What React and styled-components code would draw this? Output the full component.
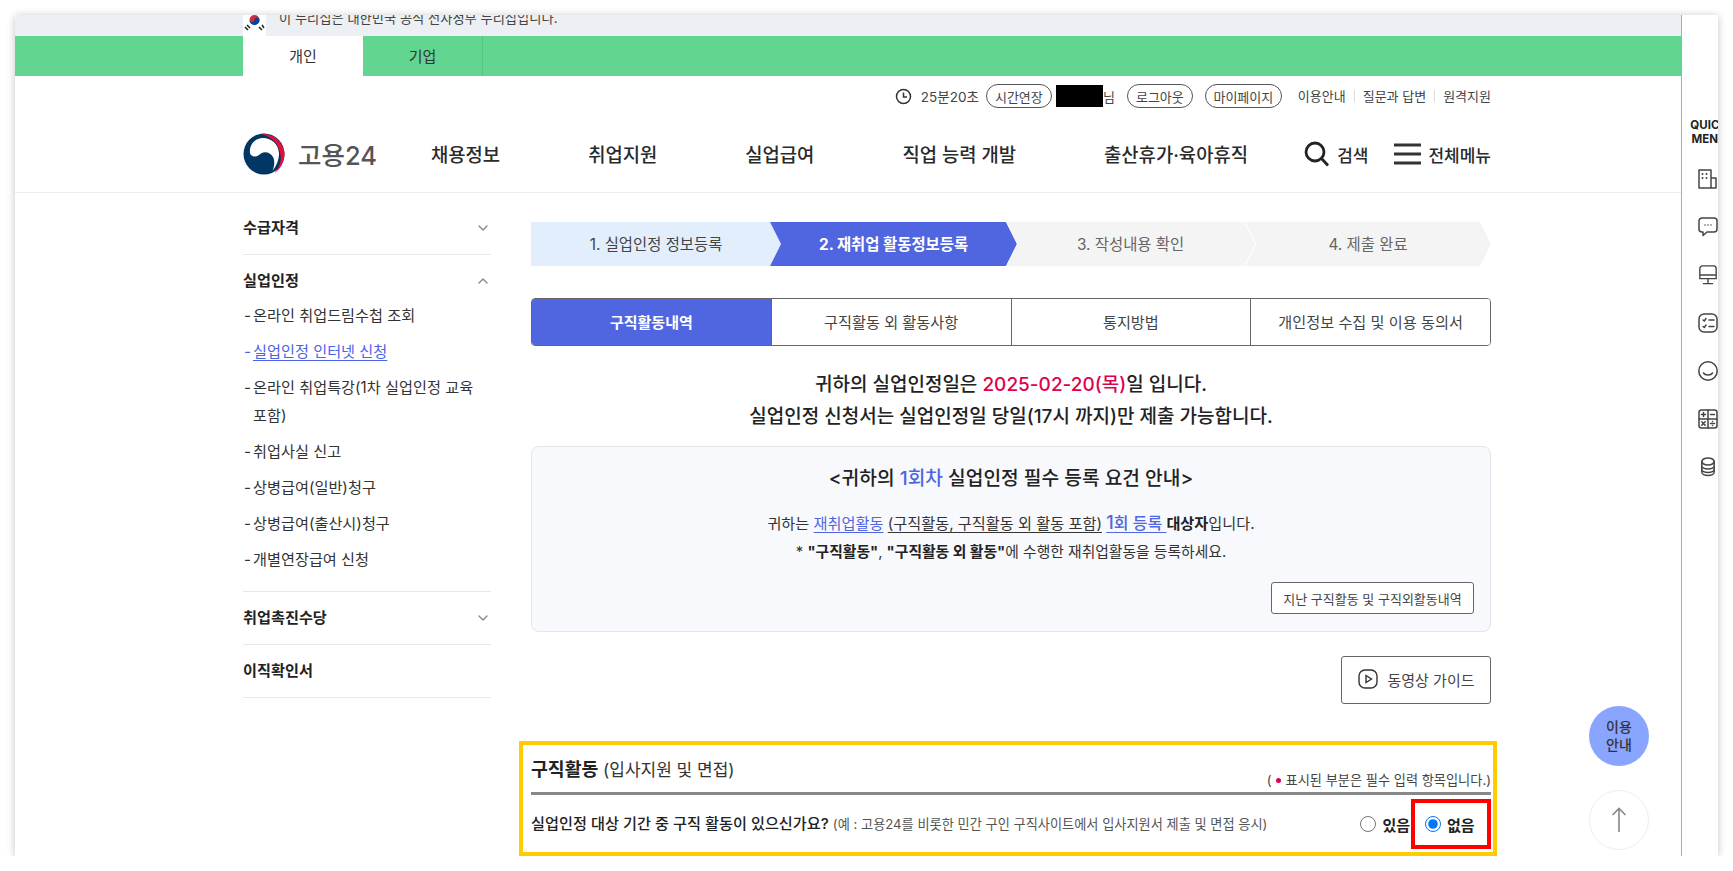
import React from 'react';
import styled, { createGlobalStyle } from 'styled-components';
import { ChevronDown, ChevronUp } from 'lucide-react';

const GlobalStyle = createGlobalStyle`
  html, body {
    margin: 0;
    padding: 0;
    background: #fff;
    overflow: hidden;
  }
  body {
    font-family: "Inter", "Noto Sans CJK KR", "Noto Sans", sans-serif;
    color: #222;
    word-break: keep-all;
  }
  * { box-sizing: border-box; }
`;

const Window = styled.div`
  position: relative;
  display: flex;
  width: 1703px;
  height: 841px;
  margin: 15px 0 0 15px;
  overflow: hidden;
  background: #fff;
  border-radius: 4px 0 0 0;
  box-shadow: 0 1px 8px rgba(0, 0, 0, 0.24);
`;
const Main = styled.div`
  width: 1667px;
  flex: none;
  border-right: 1px solid #62d590;
  overflow: hidden;
`;

const Banner = styled.div`
  display: flex;
  align-items: flex-end;
  gap: 13px;
  height: 21px;
  padding: 0 0 0 228px;
  background: #eceff3;
  overflow: hidden;
`;
const Flag = styled.svg`
  width: 23px;
  height: 30px;
  margin-bottom: -1px;
  flex: none;
`;
const BannerText = styled.span`
  font-size: 13.25px;
  line-height: 20px;
  margin-bottom: 8px;
  color: #444;
  white-space: nowrap;
`;

const GnbTabs = styled.div`
  display: flex;
  height: 40px;
  padding-left: 228px;
  background: #62d590;
`;
const GnbTab = styled.div`
  width: 120px;
  display: flex;
  align-items: center;
  justify-content: center;
  padding-bottom: 2px;
  font-size: 15px;
  color: #333;
  background: ${(p) => (p.$active ? '#fff' : 'transparent')};
  border-right: ${(p) => (p.$active ? 'none' : '1px solid #55c482')};
`;

const Header = styled.header`
  height: 117px;
  padding: 8px 190px 0 228px;
  border-bottom: 1px solid #ededed;
`;
const Utility = styled.div`
  display: flex;
  align-items: center;
  justify-content: flex-end;
  height: 24px;
  font-size: 13px;
  color: #444;
  white-space: nowrap;
`;
const Timer = styled.span`
  display: flex;
  align-items: center;
  gap: 9px;
  margin-right: 7px;
  font-size: 13.5px;
`;
const Pill = styled.span`
  display: flex;
  align-items: center;
  justify-content: center;
  height: 24px;
  width: ${(p) => p.$w}px;
  margin-left: ${(p) => p.$ml || 0}px;
  border: 1px solid #555;
  border-radius: 12px;
  font-size: 13px;
  color: #444;
  background: #fff;
`;
const Redacted = styled.span`
  width: 47px;
  height: 22px;
  margin-left: 4px;
  background: #000;
`;
const UtilLink = styled.span`
  padding: 0 8px;
  line-height: 12px;
  border-left: ${(p) => (p.$first ? 'none' : '1px solid #ddd')};
  &:last-child { padding-right: 0; }
`;
const UtilLinks = styled.div`
  display: flex;
  margin-left: 8px;
`;

const NavRow = styled.div`
  display: flex;
  align-items: center;
  height: 42px;
  margin-top: 25px;
`;
const Logo = styled.div`
  display: flex;
  align-items: center;
  gap: 13px;
  width: 188px;
  flex: none;
`;
const LogoText = styled.span`
  margin-top: 3px;
  font-size: 25.5px;
  line-height: 42px;
  font-weight: 500;
  color: #555;
  white-space: nowrap;
`;
const NavItems = styled.nav`
  display: flex;
  flex: none;
  gap: 88px;
  padding-bottom: 2px;
`;
const NavItem = styled.span`
  font-size: 18.8px;
  font-weight: 500;
  color: #2a2a2a;
  white-space: nowrap;
`;
const NavTools = styled.div`
  display: flex;
  align-items: center;
  margin-left: auto;
  font-size: 17px;
  font-weight: 500;
  color: #2a2a2a;
  white-space: nowrap;
`;
const ToolGroup = styled.span`
  display: flex;
  align-items: center;
  gap: 7px;
  margin-left: ${(p) => p.$ml || 0}px;
`;

const Body = styled.div`
  display: flex;
  padding-left: 228px;
`;
const Aside = styled.aside`
  width: 248px;
  flex: none;
  padding-top: 9px;
`;
const Group = styled.div`
  border-bottom: 1px solid #e8e8e8;
`;
const GroupHead = styled.div`
  display: flex;
  align-items: center;
  justify-content: space-between;
  padding: ${(p) => (p.$open ? '15px 0 10px 0' : '15px 0 15px 0')};
  font-size: 15.2px;
  line-height: 22px;
  font-weight: 700;
  color: #222;
  svg { color: #888; }
`;
const SubList = styled.ul`
  list-style: none;
  margin: 0;
  padding: 0 0 9px;
`;
const SubItem = styled.li`
  display: flex;
  margin-bottom: 8px;
  font-size: 15.2px;
  line-height: 28px;
  color: ${(p) => (p.$active ? '#4d63e6' : '#333')};
  span:last-child {
    text-decoration: ${(p) => (p.$active ? 'underline' : 'none')};
    text-underline-offset: 3px;
  }
`;
const Dash = styled.span`
  width: 10px;
  flex: none;
  padding-left: 1px;
`;

const Content = styled.main`
  width: 960px;
  flex: none;
  margin-left: 40px;
  padding-top: 29px;
`;
const Steps = styled.div`
  display: flex;
`;
const Step = styled.div`
  display: flex;
  align-items: center;
  justify-content: center;
  width: ${(p) => p.$w}px;
  height: 44px;
  margin-left: ${(p) => p.$ml}px;
  padding-bottom: 3px;
  font-size: 15.4px;
  font-weight: ${(p) => (p.$active ? 700 : 400)};
  color: ${(p) => (p.$active ? '#fff' : p.$done ? '#444' : '#666')};
  background: ${(p) => (p.$active ? '#4f66e0' : p.$done ? '#e3eefd' : '#f4f4f4')};
  clip-path: ${(p) => (p.$done
    ? 'polygon(0 0, calc(100% - 11px) 0, 100% 50%, calc(100% - 11px) 100%, 0 100%)'
    : 'polygon(0 0, calc(100% - 11px) 0, 100% 50%, calc(100% - 11px) 100%, 0 100%, 11px 50%)')};
`;
const Tabs = styled.div`
  display: flex;
  height: 48px;
  margin-top: 32px;
  border: 1px solid #666;
  border-radius: 4px;
  overflow: hidden;
`;
const Tab = styled.div`
  flex: 1;
  display: flex;
  align-items: center;
  justify-content: center;
  padding-bottom: 2px;
  font-size: ${(p) => (p.$active ? 15 : 15.2)}px;
  font-weight: ${(p) => (p.$active ? 700 : 400)};
  color: ${(p) => (p.$active ? '#fff' : '#444')};
  background: ${(p) => (p.$active ? '#4f66e0' : '#fff')};
  & + & { border-left: 1px solid #666; }
`;
const Headline = styled.div`
  margin-top: 23px;
  text-align: center;
  font-size: 19px;
  line-height: 32px;
  font-weight: 500;
  color: #222;
`;
const DateText = styled.span`
  color: #e0004d;
`;
const InfoBox = styled.div`
  height: 186px;
  margin-top: 13px;
  padding: 15px 16px 0;
  background: #f7f9fc;
  border: 1px solid #e2e5ea;
  border-radius: 8px;
`;
const InfoTitle = styled.div`
  text-align: center;
  font-size: 19.2px;
  line-height: 32px;
  font-weight: 500;
  color: #222;
`;
const Accent = styled.span`
  color: #4f66e0;
`;
const InfoLines = styled.div`
  margin-top: 15px;
  text-align: center;
  font-size: 15.2px;
  line-height: 28px;
  color: #333;
  a {
    color: #4f66e0;
    text-decoration: underline;
    text-underline-offset: 3px;
  }
  u { text-underline-offset: 3px; }
  strong { font-weight: 700; color: #222; }
`;
const BigLink = styled.a`
  font-size: 16px;
  font-weight: 500;
`;
const Big = styled.span`
  font-size: 18px;
`;
const TightLine = styled.span`
  font-size: 14.8px;
`;
const InfoFoot = styled.div`
  display: flex;
  justify-content: flex-end;
  margin-top: 16px;
`;
const OutlineButton = styled.button`
  display: flex;
  align-items: center;
  justify-content: center;
  gap: 8px;
  width: ${(p) => p.$w}px;
  height: ${(p) => p.$h}px;
  padding: 0 0 ${(p) => p.$pb || 0}px;
  border: 1px solid #666;
  border-radius: 3px;
  background: #fff;
  font-family: inherit;
  font-size: ${(p) => p.$fs}px;
  color: #444;
`;
const VideoRow = styled.div`
  display: flex;
  justify-content: flex-end;
  margin-top: 24px;
`;

const Section = styled.section`
  width: 978px;
  height: 115px;
  margin: 37px 0 0 -12px;
  padding: 0 2px 0 8px;
  border: 4px solid #ffcc00;
`;
const SectionHead = styled.div`
  display: flex;
  justify-content: space-between;
  align-items: flex-end;
  height: 50px;
  border-bottom: 3px solid #888;
  padding-bottom: 3px;
`;
const SectionTitle = styled.div`
  align-self: flex-start;
  margin-top: 11px;
  font-size: 17px;
  line-height: 26px;
  color: #333;
  strong {
    font-size: 18.3px;
    font-weight: 700;
    color: #222;
  }
`;
const RequiredNote = styled.div`
  font-size: 13.2px;
  line-height: 18px;
  color: #444;
  i {
    display: inline-block;
    width: 5px;
    height: 5px;
    margin: 0 5px 2px 4px;
    border-radius: 50%;
    background: #e0004d;
  }
`;
const QuestionRow = styled.div`
  display: flex;
  align-items: flex-start;
  justify-content: space-between;
`;
const Question = styled.div`
  margin-top: 18px;
  font-size: 15.2px;
  line-height: 22px;
  font-weight: 500;
  color: #222;
  white-space: nowrap;
  small {
    font-size: 13.2px;
    font-weight: 400;
    color: #555;
  }
`;
const Radios = styled.div`
  display: flex;
  align-items: center;
  margin-top: 4px;
`;
const RadioLabel = styled.label`
  display: flex;
  align-items: center;
  gap: 6px;
  height: 50px;
  font-size: 15px;
  font-weight: 700;
  color: #222;
  ${(p) => p.$marked && `
    width: 80px;
    margin-left: 1px;
    padding-left: 10px;
    border: 4px solid #f00;
  `}
  input {
    width: 16px;
    height: 16px;
    margin: 0;
    accent-color: #0075ff;
  }
`;

const Rail = styled.aside`
  flex: 1;
  overflow: hidden;
  padding: 103px 0 0 8px;
`;
const QuickLabel = styled.div`
  width: 38px;
  font-size: 11.5px;
  line-height: 14px;
  font-weight: 700;
  text-align: center;
  color: #222;
`;
const RailIcons = styled.div`
  display: flex;
  flex-direction: column;
  gap: 28px;
  margin: 23px 0 0 8px;
`;
const RailIcon = styled.svg`
  display: block;
  width: 20px;
  height: 20px;
  fill: none;
  stroke: #444;
  stroke-width: 1.5;
  stroke-linecap: round;
  stroke-linejoin: round;
`;

const Floating = styled.div`
  position: absolute;
  left: 1574px;
  top: ${(p) => p.$top}px;
  width: 60px;
  height: 60px;
  border-radius: 50%;
  display: flex;
  align-items: center;
  justify-content: center;
  text-align: center;
  font-size: 14px;
  line-height: 18px;
  font-weight: 500;
  color: #333;
  background: ${(p) => (p.$primary ? '#8aa5ff' : '#fff')};
  border: ${(p) => (p.$primary ? 'none' : '1px solid #eee')};
`;

const TaegukLogo = () => (
  <svg width="42" height="42" viewBox="0 0 42 42">
    <circle cx="21" cy="21" r="20.5" fill="#003764" />
    <path d="M18 .8C31 .2 41.500 10 41.500 21c0 8.500-4.500 15.500-10 19 4.500-5 7-11 6-18C36.500 11 28 3.500 18 .8Z" fill="#e30f3b" />
    <path d="M7 20c-1-8 5-15 13-15 8.500 0 15.500 6.500 16 15 .3 6-2 12-6.500 18 2-5 2.500-10 .5-14-2.500-4.500-8-6-12-3.500-3 2-4 3.500-7 3-2.200-.4-3.700-1.700-4-3.500Z" fill="#fff" />
  </svg>
);

const ClockIcon = () => (
  <svg width="17" height="17" viewBox="0 0 17 17" fill="none" stroke="#333" strokeWidth="1.5">
    <circle cx="8.500" cy="8.500" r="7" />
    <path d="M8.500 4.500v4.500h3.500" />
  </svg>
);

const SearchIcon = () => (
  <svg width="26" height="26" viewBox="0 0 26 26" fill="none" stroke="#222" strokeWidth="2.800">
    <circle cx="11" cy="11" r="9" />
    <path d="M17.500 17.500 24 24.500" />
  </svg>
);

const MenuIcon = () => (
  <svg width="27" height="22" viewBox="0 0 27 22" fill="none" stroke="#333" strokeWidth="2.800">
    <path d="M0 2h27M0 11h27M0 20h27" />
  </svg>
);

const PlayIcon = () => (
  <svg width="22" height="22" viewBox="0 0 22 22" fill="none" stroke="#333" strokeWidth="1.400">
    <rect x="2" y="2" width="18" height="18" rx="6" />
    <path d="M9 7.500 14.500 11 9 14.500Z" />
  </svg>
);

const ArrowUpIcon = () => (
  <svg width="16" height="28" viewBox="0 0 16 28" fill="none" stroke="#888" strokeWidth="2">
    <path d="M8 26V3M1.500 9 8 2.500 14.500 9" strokeWidth="1.600" />
  </svg>
);

const BuildingIcon = () => (
  <RailIcon viewBox="0 0 20 20">
    <path d="M1 1h12v18H1zM13 9h5v10h-5" />
    <path d="M4.500 5h.01M8.500 5h.01M4.500 9h.01M8.500 9h.01" strokeWidth="2" />
  </RailIcon>
);
const ChatIcon = () => (
  <RailIcon viewBox="0 0 20 20">
    <path d="M4 1h12a3 3 0 0 1 3 3v8a3 3 0 0 1-3 3h-7l-4 3.500V15H4a3 3 0 0 1-3-3V4a3 3 0 0 1 3-3Z" />
    <path d="M7 8h.01M10 8h.01M13 8h.01" />
  </RailIcon>
);
const MonitorIcon = () => (
  <RailIcon viewBox="0 0 20 22">
    <path d="M4 1h12a3 3 0 0 1 3 3v11H1V4a3 3 0 0 1 3-3ZM1 11h18M10 15v5M5 20.500h10" />
  </RailIcon>
);
const ChecklistIcon = () => (
  <RailIcon viewBox="0 0 20 20">
    <rect x="1" y="1" width="18" height="18" rx="5" />
    <path d="M5 7l1.300 1L8 5.500M5 13.500l1.300 1L8 12M11 7h5M11 13.500h5" />
  </RailIcon>
);
const SmileIcon = () => (
  <RailIcon viewBox="0 0 20 20">
    <circle cx="10" cy="10" r="9.200" />
    <path d="M5.500 12c1.500 2.500 7.500 2.500 9 0" />
  </RailIcon>
);
const CalcIcon = () => (
  <RailIcon viewBox="0 0 20 20">
    <rect x="1" y="1" width="18" height="18" rx="2.500" />
    <path d="M10 1v18M1 10h18M3.500 5.500h4M5.500 3.500v4M12.500 5.500h4M3.800 12.800l3.400 3.400M7.200 12.800l-3.400 3.400M12.500 14.500h4M14.500 12.400h.01M14.500 16.600h.01" />
  </RailIcon>
);
const DbIcon = () => (
  <RailIcon viewBox="0 0 20 20">
    <ellipse cx="10" cy="4.500" rx="6.200" ry="3.500" />
    <path d="M3.800 4.500v10.500c0 2 2.800 3.500 6.200 3.500s6.200-1.500 6.200-3.500V4.500M3.800 8.500c0 2 2.800 3.500 6.200 3.500s6.200-1.500 6.200-3.500M3.800 12c0 2 2.800 3.500 6.200 3.500s6.200-1.500 6.200-3.500" />
  </RailIcon>
);

const KoreaFlag = () => (
  <Flag viewBox="0 0 23 30">
    <rect width="23" height="30" fill="#fff" />
    <circle cx="11.500" cy="13" r="5" fill="#cd2e3a" />
    <path d="M6.500 13a5 5 0 0 0 10 0c0-1.500-1.200-2.500-2.500-2.500S11.500 11.500 11.500 13 10.300 15 9 15s-2.500-.5-2.500-2Z" fill="#0047a0" />
    <path d="M2 20l3 3M4 18l3 3M19 18l2 3M16 20l3 3" stroke="#222" strokeWidth="1.500" />
  </Flag>
);

const NAV = ['채용정보', '취업지원', '실업급여', '직업 능력 개발', '출산휴가·육아휴직'];
const SUB = ['온라인 취업드림수첩 조회', '실업인정 인터넷 신청', '온라인 취업특강(1차 실업인정 교육 포함)', '취업사실 신고', '상병급여(일반)청구', '상병급여(출산시)청구', '개별연장급여 신청'];
const STEPS = [
  { label: '1. 실업인정 정보등록', w: 250, ml: 0, done: true },
  { label: '2. 재취업 활동정보등록', w: 247, ml: -11, active: true },
  { label: '3. 작성내용 확인', w: 249, ml: -11 },
  { label: '4. 제출 완료', w: 246, ml: -10 },
];
const TABS = ['구직활동내역', '구직활동 외 활동사항', '통지방법', '개인정보 수집 및 이용 동의서'];

const App = () => (
  <>
    <GlobalStyle />
    <Window>
      <Main>
        <Banner>
          <KoreaFlag />
          <BannerText>이 누리집은 대한민국 공식 전자정부 누리집입니다.</BannerText>
        </Banner>
        <GnbTabs>
          <GnbTab $active>개인</GnbTab>
          <GnbTab>기업</GnbTab>
        </GnbTabs>
        <Header>
          <Utility>
            <Timer><ClockIcon />25분20초</Timer>
            <Pill $w={66}>시간연장</Pill>
            <Redacted />
            <span>님</span>
            <Pill $w={66} $ml={12}>로그아웃</Pill>
            <Pill $w={77} $ml={12}>마이페이지</Pill>
            <UtilLinks>
              <UtilLink $first>이용안내</UtilLink>
              <UtilLink>질문과 답변</UtilLink>
              <UtilLink>원격지원</UtilLink>
            </UtilLinks>
          </Utility>
          <NavRow>
            <Logo>
              <TaegukLogo />
              <LogoText>고용24</LogoText>
            </Logo>
            <NavItems>
              {NAV.map((n) => <NavItem key={n}>{n}</NavItem>)}
            </NavItems>
            <NavTools>
              <ToolGroup><SearchIcon />검색</ToolGroup>
              <ToolGroup $ml={26}><MenuIcon />전체메뉴</ToolGroup>
            </NavTools>
          </NavRow>
        </Header>
        <Body>
          <Aside>
            <Group>
              <GroupHead>수급자격<ChevronDown size={16} /></GroupHead>
            </Group>
            <Group>
              <GroupHead $open>실업인정<ChevronUp size={16} /></GroupHead>
              <SubList>
                {SUB.map((s, i) => (
                  <SubItem key={s} $active={i === 1}>
                    <Dash>-</Dash>
                    <span>{s}</span>
                  </SubItem>
                ))}
              </SubList>
            </Group>
            <Group>
              <GroupHead>취업촉진수당<ChevronDown size={16} /></GroupHead>
            </Group>
            <Group>
              <GroupHead>이직확인서</GroupHead>
            </Group>
          </Aside>
          <Content>
            <Steps>
              {STEPS.map((s) => (
                <Step key={s.label} $w={s.w} $ml={s.ml} $active={s.active} $done={s.done}>{s.label}</Step>
              ))}
            </Steps>
            <Tabs>
              {TABS.map((t, i) => <Tab key={t} $active={i === 0}>{t}</Tab>)}
            </Tabs>
            <Headline>
              귀하의 실업인정일은 <DateText>2025-02-20(목)</DateText>일 입니다.<br />
              실업인정 신청서는 실업인정일 당일(17시 까지)만 제출 가능합니다.
            </Headline>
            <InfoBox>
              <InfoTitle>&lt;귀하의 <Accent>1회차</Accent> 실업인정 필수 등록 요건 안내&gt;</InfoTitle>
              <InfoLines>
                귀하는 <a>재취업활동</a> <u>(구직활동, 구직활동 외 활동 포함)</u> <BigLink><Big>1</Big>회 등록 </BigLink><strong>대상자</strong>입니다.<br />
                <TightLine>* <strong>"구직활동"</strong>, <strong>"구직활동 외 활동"</strong>에 수행한 재취업활동을 등록하세요.</TightLine>
              </InfoLines>
              <InfoFoot>
                <OutlineButton $w={203} $h={32} $fs={13}>지난 구직활동 및 구직외활동내역</OutlineButton>
              </InfoFoot>
            </InfoBox>
            <VideoRow>
              <OutlineButton $w={150} $h={48} $fs={15} $pb={2}><PlayIcon />동영상 가이드</OutlineButton>
            </VideoRow>
            <Section>
              <SectionHead>
                <SectionTitle><strong>구직활동</strong> (입사지원 및 면접)</SectionTitle>
                <RequiredNote>(<i />표시된 부분은 필수 입력 항목입니다.)</RequiredNote>
              </SectionHead>
              <QuestionRow>
                <Question>실업인정 대상 기간 중 구직 활동이 있으신가요? <small>(예 : 고용24를 비롯한 민간 구인 구직사이트에서 입사지원서 제출 및 면접 응시)</small></Question>
                <Radios>
                  <RadioLabel><input type="radio" name="job" readOnly />있음</RadioLabel>
                  <RadioLabel $marked><input type="radio" name="job" defaultChecked />없음</RadioLabel>
                </Radios>
              </QuestionRow>
            </Section>
          </Content>
        </Body>
      </Main>
      <Rail>
        <QuickLabel>QUICK MENU</QuickLabel>
        <RailIcons>
          <BuildingIcon />
          <ChatIcon />
          <MonitorIcon />
          <ChecklistIcon />
          <SmileIcon />
          <CalcIcon />
          <DbIcon />
        </RailIcons>
      </Rail>
      <Floating $primary $top={691}>이용<br />안내</Floating>
      <Floating $top={775}><ArrowUpIcon /></Floating>
    </Window>
  </>
);

export default App;
